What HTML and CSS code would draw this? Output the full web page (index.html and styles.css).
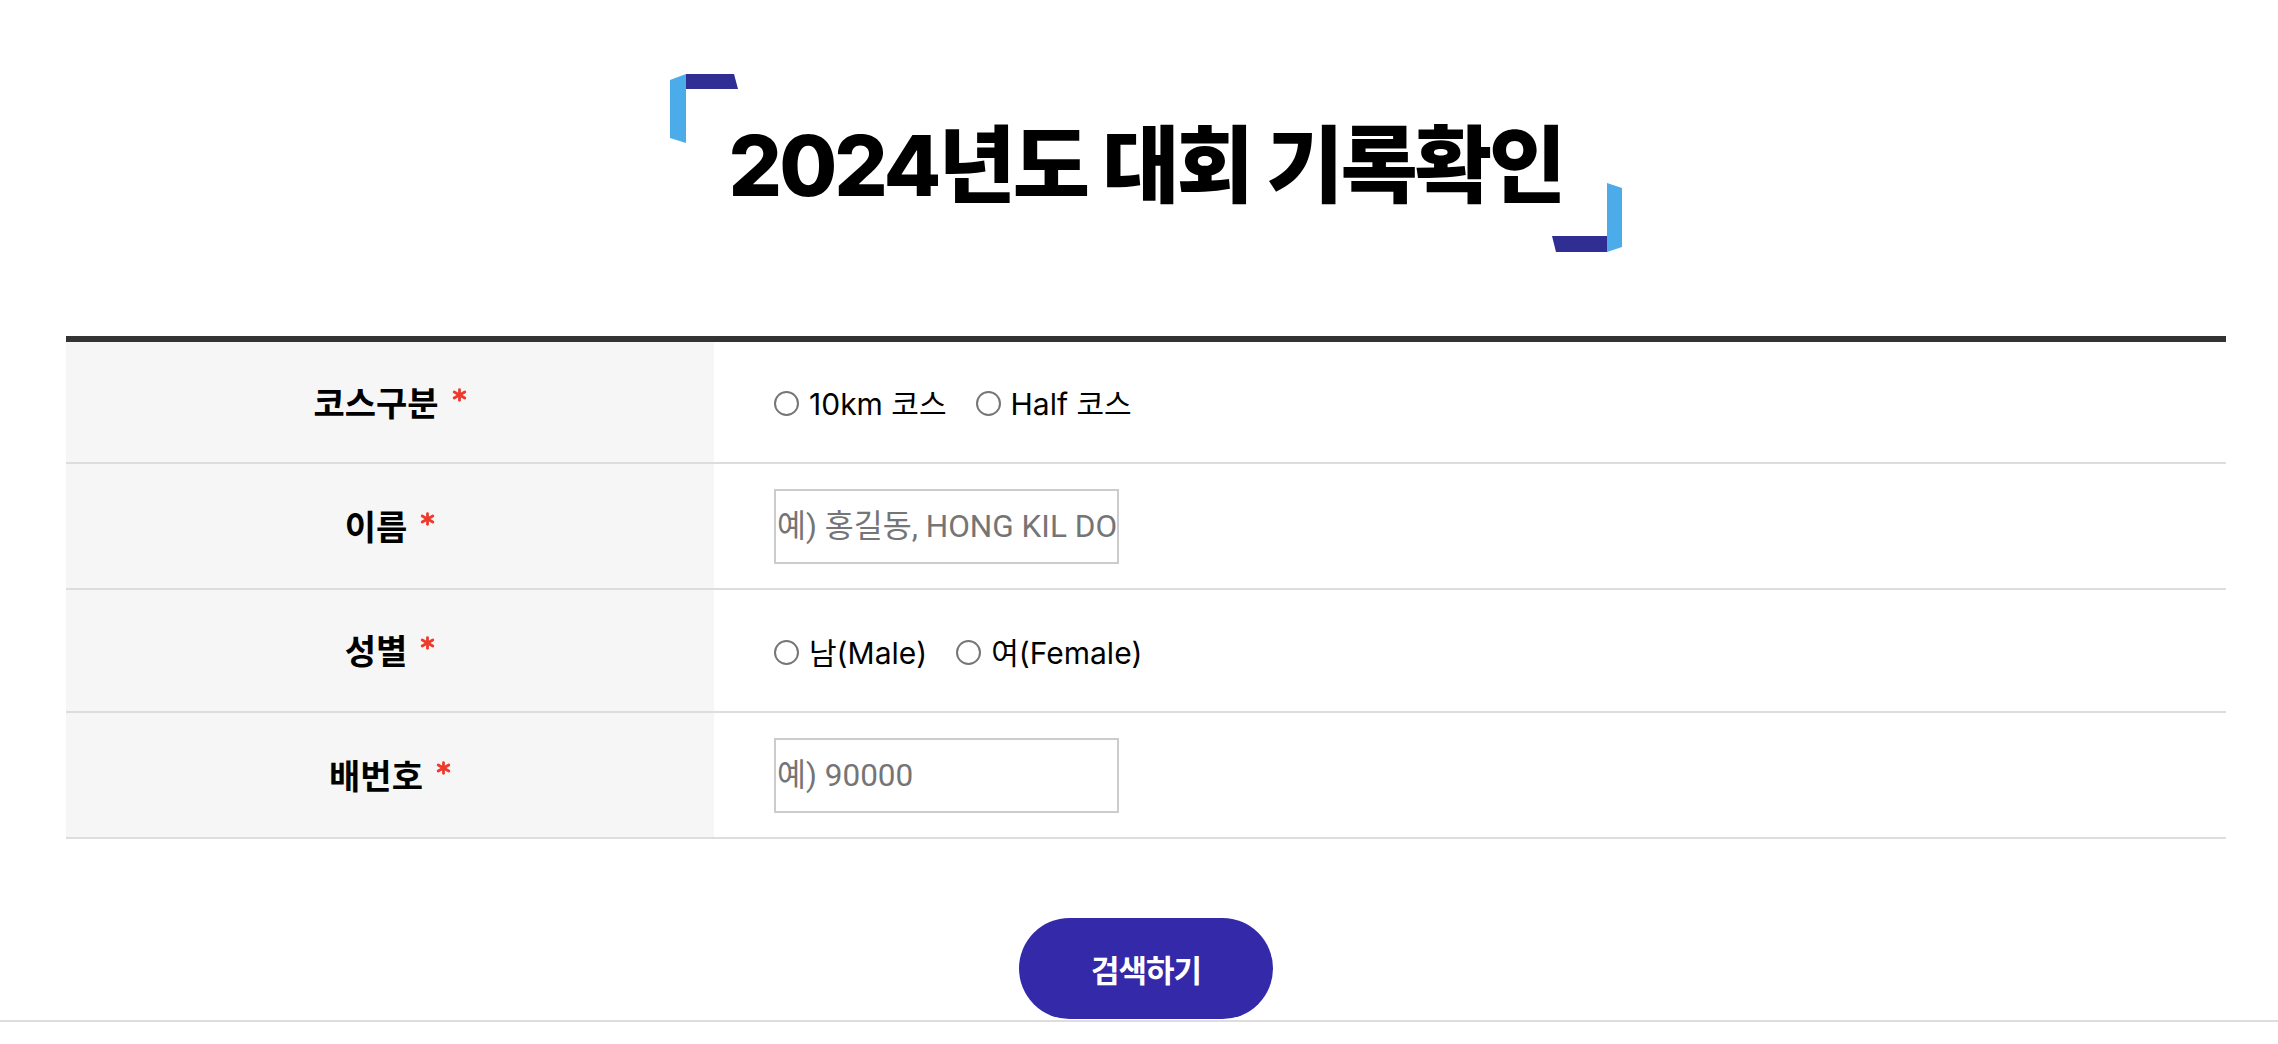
FILE: index.html
```html
<!DOCTYPE html>
<html lang="ko">
<head>
    <meta charset="UTF-8">
    <meta name="viewport" content="width=device-width, initial-scale=1.0">
    <title>2024년도 대회 기록확인</title>
    <link rel="stylesheet" href="styles.css">
</head>
<body>
    <div class="container">
        <div class="title-area">
            <h2 class="title">
                <svg class="corner corner-tl" width="70" height="70" viewBox="0 0 70 70">
                    <polygon points="0,6 16,0 16,69 0,64" fill="#4cabe9"/>
                    <polygon points="16,0 64,0 68,15 16,15" fill="#302e93"/>
                </svg>
                2024년도 대회 기록확인
                <svg class="corner corner-br" width="70" height="70" viewBox="0 0 70 70">
                    <polygon points="55,0 70,5 70,64 55,69" fill="#4cabe9"/>
                    <polygon points="0,53 55,53 55,69 4,69" fill="#302e93"/>
                </svg>
            </h2>
        </div>

        <div class="form">
            <div class="row row-radio">
                <div class="row-head">
                    <span class="label">코스구분<svg class="req" width="15" height="14" viewBox="0 0 17 15"><g stroke="#ee3a2c" stroke-width="3.2" stroke-linecap="round"><line x1="8.5" y1="1.5" x2="8.5" y2="13.5"/><line x1="2.5" y1="4" x2="14.5" y2="11"/><line x1="2.5" y1="11" x2="14.5" y2="4"/></g></svg></span>
                </div>
                <div class="row-body">
                    <label class="radio"><input type="radio" name="course"><span>10km 코스</span></label>
                    <label class="radio"><input type="radio" name="course"><span>Half 코스</span></label>
                </div>
            </div>
            <div class="row row-input">
                <div class="row-head">
                    <span class="label">이름<svg class="req" width="15" height="14" viewBox="0 0 17 15"><g stroke="#ee3a2c" stroke-width="3.2" stroke-linecap="round"><line x1="8.5" y1="1.5" x2="8.5" y2="13.5"/><line x1="2.5" y1="4" x2="14.5" y2="11"/><line x1="2.5" y1="11" x2="14.5" y2="4"/></g></svg></span>
                </div>
                <div class="row-body">
                    <input class="text-input" type="text" placeholder="예) 홍길동, HONG KIL DONG">
                </div>
            </div>
            <div class="row row-radio row-gender">
                <div class="row-head">
                    <span class="label">성별<svg class="req" width="15" height="14" viewBox="0 0 17 15"><g stroke="#ee3a2c" stroke-width="3.2" stroke-linecap="round"><line x1="8.5" y1="1.5" x2="8.5" y2="13.5"/><line x1="2.5" y1="4" x2="14.5" y2="11"/><line x1="2.5" y1="11" x2="14.5" y2="4"/></g></svg></span>
                </div>
                <div class="row-body">
                    <label class="radio"><input type="radio" name="gender"><span>남(Male)</span></label>
                    <label class="radio"><input type="radio" name="gender"><span>여(Female)</span></label>
                </div>
            </div>
            <div class="row row-input">
                <div class="row-head">
                    <span class="label">배번호<svg class="req" width="15" height="14" viewBox="0 0 17 15"><g stroke="#ee3a2c" stroke-width="3.2" stroke-linecap="round"><line x1="8.5" y1="1.5" x2="8.5" y2="13.5"/><line x1="2.5" y1="4" x2="14.5" y2="11"/><line x1="2.5" y1="11" x2="14.5" y2="4"/></g></svg></span>
                </div>
                <div class="row-body">
                    <input class="text-input" type="text" placeholder="예) 90000">
                </div>
            </div>
        </div>

        <div class="btn-area">
            <button class="btn-search">검색하기</button>
        </div>
    </div>
    <div class="footer-line"></div>
</body>
</html>
```

FILE: styles.css
```css
body {
    margin: 0;
    padding: 0;
    background-color: #fff;
    color: #000;
    font-family: "Inter", "Noto Sans CJK KR", sans-serif;
}
.container {
    width: 2160px;
    margin-left: 66px;
}
.title-area {
    padding-top: 74px;
    display: flex;
    justify-content: center;
}
.title {
    position: relative;
    margin: 0;
    width: 952px;
    height: 179px;
    box-sizing: border-box;
    padding-bottom: 8px;
    display: flex;
    justify-content: center;
    align-items: center;
    font-size: 84px;
    font-weight: 800;
    letter-spacing: -3px;
}
.corner {
    position: absolute;
}
.corner-tl {
    left: 0;
    top: 0;
}
.corner-br {
    right: 0;
    bottom: 0;
}
.form {
    margin-top: 83px;
    border-top: 6px solid #333;
}
.row {
    display: flex;
    border-bottom: 2px solid #ddd;
}
.row-radio {
    height: 120px;
}
.row-gender {
    height: 121px;
}
.row-input {
    height: 124px;
}
.row-head {
    width: 648px;
    flex-shrink: 0;
    background-color: #f6f6f6;
    display: flex;
    justify-content: center;
    align-items: center;
}
.label {
    display: inline-flex;
    align-items: flex-start;
    font-family: "Noto Sans CJK KR", sans-serif;
    font-size: 34px;
    font-weight: 700;
    line-height: 1.2;
}
.req {
    margin-left: 13px;
    margin-top: 6px;
}
.row-body {
    flex: 1;
    display: flex;
    align-items: center;
    padding-left: 60px;
}
.radio {
    display: inline-flex;
    align-items: center;
    margin-right: 29px;
    font-family: "Inter", "Noto Sans CJK KR", sans-serif;
    font-size: 30px;
    cursor: pointer;
}
.radio input {
    appearance: none;
    -webkit-appearance: none;
    width: 25px;
    height: 25px;
    margin: 3px 10px 0 0;
    border: 2px solid #767676;
    border-radius: 50%;
    background: #fff;
}
.text-input {
    width: 345px;
    height: 75px;
    box-sizing: border-box;
    border: 2px solid #ccc;
    padding: 0 1px;
    font-family: "Roboto", "Noto Sans CJK KR", sans-serif;
    font-size: 31.5px;
    color: #333;
    outline: none;
}
.text-input::placeholder {
    color: #757575;
}
.btn-area {
    display: flex;
    justify-content: center;
    padding-top: 79px;
    padding-bottom: 1px;
}
.btn-search {
    width: 254px;
    height: 101px;
    border: none;
    border-radius: 51px;
    background-color: #3329a9;
    color: #fff;
    font-family: "Noto Sans CJK KR", sans-serif;
    font-size: 31px;
    font-weight: 700;
    letter-spacing: -1px;
    cursor: pointer;
}
.footer-line {
    border-top: 2px solid #ddd;
    height: 40px;
}
```
